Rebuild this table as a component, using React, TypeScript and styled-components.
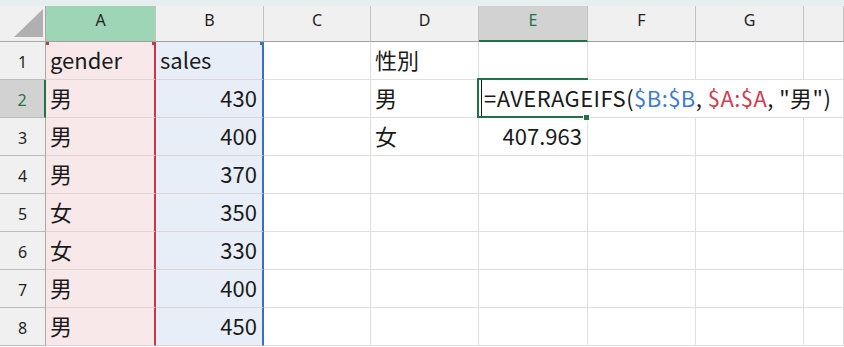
import React from "react";
import styled, { createGlobalStyle } from "styled-components";

const GlobalStyle = createGlobalStyle`
  html, body {
    margin: 0;
    padding: 0;
    background: #ffffff;
  }
  body {
    width: 844px;
    height: 347px;
    overflow: hidden;
  }
`;

const CELL_FONT = `"Noto Sans CJK JP", "Noto Sans", sans-serif`;
const HEAD_FONT = `"Noto Sans", "Open Sans", sans-serif`;
const GREEN = "#217346";

const Sheet = styled.div`
  display: grid;
  grid-template-columns: 46px 110px 108px 107px 108px 109px 108px 108px 1fr;
  grid-template-rows: 6px 36px repeat(8, 38px);
  width: 844px;
  height: 347px;
  overflow: hidden;
  background: #ffffff;
`;

const TopStrip = styled.div`
  grid-column: 1 / -1;
  background: #e7eef0;
`;

const Corner = styled.div`
  box-sizing: border-box;
  background: #f0f0f0;
  border-right: 1px solid #a9a9a9;
  border-bottom: 1px solid #a9a9a9;
  display: flex;
  align-items: flex-end;
  justify-content: flex-end;
  padding: 0 2px 4px 0;
`;

const ColHead = styled.div<{ $state?: "active" | "tinted" }>`
  box-sizing: border-box;
  display: flex;
  align-items: center;
  justify-content: center;
  padding-bottom: 7px;
  font-family: ${HEAD_FONT};
  font-size: 16px;
  color: ${(p) => (p.$state === "active" ? GREEN : "#1f1f1f")};
  background: ${(p) =>
    p.$state === "active" ? "#d2d2d2" : p.$state === "tinted" ? "#9fd5b7" : "#f0f0f0"};
  border-right: 1px solid #c3c3c3;
  border-bottom: ${(p) => (p.$state === "active" ? `2px solid ${GREEN}` : "1px solid #a0a0a0")};
`;

const RowHead = styled.div<{ $active?: boolean }>`
  box-sizing: border-box;
  display: flex;
  align-items: center;
  justify-content: center;
  padding-top: 3px;
  font-family: ${HEAD_FONT};
  font-size: 16px;
  color: ${(p) => (p.$active ? GREEN : "#1f1f1f")};
  background: ${(p) => (p.$active ? "#d2d2d2" : "#f0f0f0")};
  border-right: ${(p) => (p.$active ? `2px solid ${GREEN}` : "1px solid #a9a9a9")};
  border-bottom: 1px solid #bcbcbc;
`;

type Tint = "red" | "blue";

const tintBg = { red: "#f8e8e9", blue: "#e8eef8" };
const tintLine = { red: "#c5384b", blue: "#3a6fc8" };

const Cell = styled.div<{ $tint?: Tint; $right?: boolean }>`
  position: relative;
  box-sizing: border-box;
  display: flex;
  align-items: flex-end;
  justify-content: ${(p) => (p.$right ? "flex-end" : "flex-start")};
  padding: 0 5px 9px 4px;
  font-family: ${CELL_FONT};
  font-size: 22px;
  line-height: 1;
  color: #1a1a1a;
  white-space: nowrap;
  background: ${(p) => (p.$tint ? tintBg[p.$tint] : "#ffffff")};
  border-bottom: 1px solid ${(p) => (p.$tint ? "#dcd6d8" : "#dfdfdf")};
  border-right: ${(p) => (p.$tint ? `2px solid ${tintLine[p.$tint]}` : "1px solid #dfdfdf")};
`;

const Handle = styled.span<{ $tint: Tint; $side: "left" | "right" }>`
  position: absolute;
  top: 0;
  ${(p) => (p.$side === "left" ? "left: 0;" : "right: -3px;")}
  width: ${(p) => (p.$side === "left" ? "3px" : "5px")};
  height: 3px;
  background: ${(p) => tintLine[p.$tint]};
`;

const Selection = styled.span`
  position: absolute;
  top: -2px;
  left: -2px;
  right: -1px;
  bottom: -1px;
  border: 2px solid ${GREEN};
  border-right: none;
  z-index: 3;
  pointer-events: none;
`;

const FillHandle = styled.span`
  position: absolute;
  right: -3px;
  bottom: -4px;
  width: 5px;
  height: 5px;
  background: ${GREEN};
  border: 1px solid #ffffff;
  z-index: 4;
`;

const Editor = styled.span`
  position: absolute;
  top: 0;
  bottom: 0;
  left: 2px;
  width: 358px;
  display: flex;
  align-items: flex-end;
  padding: 0 0 9px 2px;
  box-sizing: border-box;
  background: #ffffff;
  border-left: 1px solid #111111;
  letter-spacing: 0.45px;
  z-index: 2;
  color: #1a1a1a;
`;

const Ref = styled.span<{ $tint: Tint }>`
  color: ${(p) => (p.$tint === "blue" ? "#3d7ad6" : "#d13b50")};
`;

const TriangleSvg = () => (
  <svg width="29" height="28" viewBox="0 0 29 28">
    <polygon points="29,0 29,28 0,28" fill="#b0b0b0" />
  </svg>
);

const columns = ["A", "B", "C", "D", "E", "F", "G", ""];

type Row = { a: string; b: string; d?: string; e?: string };

const rows: Row[] = [
  { a: "gender", b: "sales", d: "性別" },
  { a: "男", b: "430", d: "男" },
  { a: "男", b: "400", d: "女", e: "407.963" },
  { a: "男", b: "370" },
  { a: "女", b: "350" },
  { a: "女", b: "330" },
  { a: "男", b: "400" },
  { a: "男", b: "450" },
];

export default function App() {
  return (
    <>
      <GlobalStyle />
      <Sheet>
        <TopStrip />
        <Corner>
          <TriangleSvg />
        </Corner>
        {columns.map((c) => (
          <ColHead key={c || "H"} $state={c === "E" ? "active" : c === "A" ? "tinted" : undefined}>
            {c}
          </ColHead>
        ))}
        {rows.map((r, i) => {
          const n = i + 1;
          const header = n === 1;
          return (
            <React.Fragment key={n}>
              <RowHead $active={n === 2}>{n}</RowHead>
              <Cell $tint="red">
                {header && <Handle $tint="red" $side="left" />}
                {header && <Handle $tint="red" $side="right" />}
                {r.a}
              </Cell>
              <Cell $tint="blue" $right={!header}>
                {header && <Handle $tint="blue" $side="right" />}
                {r.b}
              </Cell>
              <Cell />
              <Cell>{r.d}</Cell>
              {n === 2 ? (
                <Cell>
                  <Selection />
                  <FillHandle />
                  <Editor>
                    =AVERAGEIFS(<Ref $tint="blue">$B:$B</Ref>,&nbsp;<Ref $tint="red">$A:$A</Ref>, "男")
                  </Editor>
                </Cell>
              ) : (
                <Cell $right>{r.e}</Cell>
              )}
              <Cell />
              <Cell />
              <Cell />
            </React.Fragment>
          );
        })}
      </Sheet>
    </>
  );
}
